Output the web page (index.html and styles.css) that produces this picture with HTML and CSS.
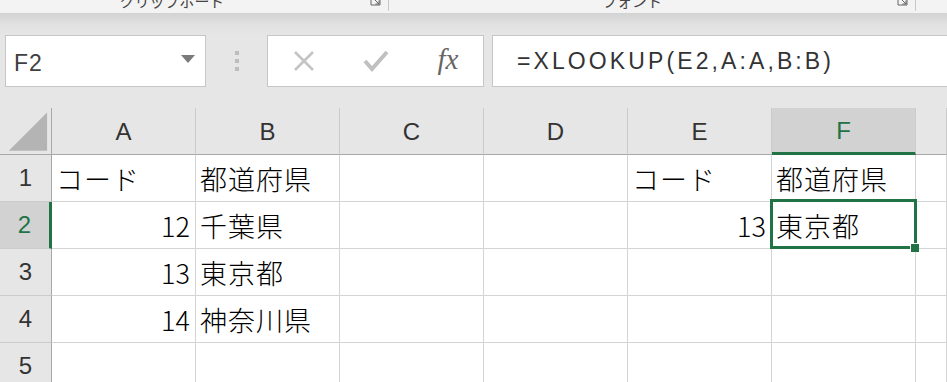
FILE: index.html
```html
<!DOCTYPE html>
<html lang="ja">
<head>
    <meta charset="UTF-8">
    <title>XLOOKUP</title>
    <link rel="stylesheet" href="styles.css">
</head>
<body>
    <div class="ribbon">
        <div class="group group-clip">
            <span class="group-label">クリップボード</span>
            <svg class="launcher" width="11" height="11" viewBox="0 0 11 11"><path d="M1 1h9v9H1z M4 4l5 5 M9 5.5V9H5.5" fill="none" stroke="#666" stroke-width="1"/></svg>
        </div>
        <div class="group group-font">
            <span class="group-label">フォント</span>
            <svg class="launcher" width="11" height="11" viewBox="0 0 11 11"><path d="M1 1h9v9H1z M4 4l5 5 M9 5.5V9H5.5" fill="none" stroke="#666" stroke-width="1"/></svg>
        </div>
    </div>

    <div class="toolbar">
        <div class="namebox">
            <span>F2</span>
            <svg width="14" height="8" viewBox="0 0 14 8"><path d="M0 0h14L7 8z" fill="#7a7a7a"/></svg>
        </div>
        <div class="grip"><i></i><i></i><i></i></div>
        <div class="fx-buttons">
            <svg width="22" height="20" viewBox="0 0 22 20"><path d="M2 1l18 18M20 1L2 19" stroke="#c4c4c4" stroke-width="2.6" fill="none"/></svg>
            <svg width="26" height="22" viewBox="0 0 26 22"><path d="M2 11l7 8L24 2" stroke="#c0c0c0" stroke-width="4" fill="none"/></svg>
            <span class="fx">fx</span>
        </div>
        <div class="formula">=XLOOKUP(E2,A:A,B:B)</div>
    </div>

    <div class="sheet">
        <div class="hd corner"><svg width="52" height="47" viewBox="0 0 52 47"><path d="M48 4V43H9z" fill="#b4b4b4"/></svg></div>
        <div class="hd col">A</div>
        <div class="hd col">B</div>
        <div class="hd col">C</div>
        <div class="hd col">D</div>
        <div class="hd col">E</div>
        <div class="hd col active">F</div>
        <div class="hd col"></div>

        <div class="hd row">1</div>
        <div class="cell">コード</div>
        <div class="cell">都道府県</div>
        <div class="cell"></div>
        <div class="cell"></div>
        <div class="cell">コード</div>
        <div class="cell">都道府県</div>
        <div class="cell"></div>

        <div class="hd row active">2</div>
        <div class="cell num">12</div>
        <div class="cell">千葉県</div>
        <div class="cell"></div>
        <div class="cell"></div>
        <div class="cell num">13</div>
        <div class="cell selected">東京都<span class="sel-box"><span class="handle"></span></span></div>
        <div class="cell"></div>

        <div class="hd row">3</div>
        <div class="cell num">13</div>
        <div class="cell">東京都</div>
        <div class="cell"></div>
        <div class="cell"></div>
        <div class="cell"></div>
        <div class="cell"></div>
        <div class="cell"></div>

        <div class="hd row">4</div>
        <div class="cell num">14</div>
        <div class="cell">神奈川県</div>
        <div class="cell"></div>
        <div class="cell"></div>
        <div class="cell"></div>
        <div class="cell"></div>
        <div class="cell"></div>

        <div class="hd row">5</div>
        <div class="cell"></div>
        <div class="cell"></div>
        <div class="cell"></div>
        <div class="cell"></div>
        <div class="cell"></div>
        <div class="cell"></div>
        <div class="cell"></div>
    </div>
</body>
</html>
```

FILE: styles.css
```css
* {
    margin: 0;
    padding: 0;
    box-sizing: border-box;
}
body {
    width: 947px;
    height: 382px;
    overflow: hidden;
    background-color: #e6e6e6;
    font-family: "Liberation Sans", "Noto Sans CJK JP", sans-serif;
}
.ribbon {
    display: flex;
    height: 13px;
    overflow: hidden;
    background-color: #f3f3f3;
}
.group {
    display: flex;
    align-items: flex-start;
    border-right: 1px solid #c8c8c8;
    height: 11px;
}
.group-clip {
    width: 389px;
}
.group-font {
    width: 527px;
}
.group-label {
    flex: 1;
    text-align: center;
    font-family: "Noto Sans CJK JP", sans-serif;
    font-size: 15px;
    line-height: 15px;
    color: #444;
    margin-top: -7px;
}
.group-clip .group-label {
    padding-right: 26px;
}
.group-font .group-label {
    padding-right: 22px;
}
.launcher {
    margin-top: -5px;
    margin-right: 7px;
}
.toolbar {
    display: flex;
    align-items: flex-start;
    height: 95px;
    padding: 22px 0 0 5px;
    background: linear-gradient(#d3d3d3 0, #e2e2e2 12px, #e6e6e6 22px);
}
.namebox {
    display: flex;
    align-items: center;
    justify-content: space-between;
    width: 201px;
    height: 52px;
    padding: 4px 10px 0 8px;
    background: #fff;
    border: 1px solid #c6c6c6;
    font-size: 23px;
    color: #404040;
    letter-spacing: 1px;
}
.namebox svg {
    margin-top: -8px;
}
.grip {
    display: flex;
    flex-direction: column;
    align-items: center;
    justify-content: center;
    gap: 4px;
    width: 61px;
    height: 52px;
}
.grip i {
    width: 4px;
    height: 4px;
    background: #bdbdbd;
}
.fx-buttons {
    display: grid;
    grid-template-columns: repeat(3, 72px);
    align-items: center;
    justify-items: center;
    width: 217px;
    height: 52px;
    background: #fff;
    border: 1px solid #c6c6c6;
}
.fx {
    font-family: "Liberation Serif", serif;
    font-style: italic;
    font-size: 29px;
    color: #666;
    margin-top: -4px;
}
.formula {
    flex: 1;
    height: 52px;
    margin-left: 8px;
    padding-left: 24px;
    display: flex;
    align-items: center;
    background: #fff;
    border: 1px solid #c6c6c6;
    border-right: none;
    font-size: 23px;
    letter-spacing: 3.1px;
    color: #333;
}
.sheet {
    display: grid;
    grid-template-columns: 52px repeat(6, 144px) 1fr;
    grid-template-rows: repeat(6, 47px);
}
.hd {
    display: flex;
    align-items: center;
    justify-content: center;
    background: #e6e6e6;
    font-size: 24px;
    color: #333;
}
.col {
    border-right: 1px solid #cbcbcb;
    border-bottom: 1px solid #a8a8a8;
    padding-top: 2px;
}
.row {
    border-right: 1px solid #a8a8a8;
    border-bottom: 1px solid #cbcbcb;
}
.corner {
    border-right: 1px solid #a8a8a8;
    border-bottom: 1px solid #a8a8a8;
}
.col.active {
    background: #d2d2d2;
    color: #217346;
    border-bottom: 3px solid #217346;
}
.row.active {
    background: #d2d2d2;
    color: #217346;
    border-right: 3px solid #217346;
}
.cell {
    position: relative;
    display: flex;
    align-items: center;
    padding: 0 5px 0 4px;
    background: #fff;
    border-right: 1px solid #d4d4d4;
    border-bottom: 1px solid #d4d4d4;
    font-family: "Noto Sans CJK JP", sans-serif;
    font-weight: 300;
    font-size: 27px;
    letter-spacing: 1px;
    color: #000;
    white-space: nowrap;
}
.num {
    justify-content: flex-end;
    letter-spacing: 0;
}
.selected {
    z-index: 1;
}
.sel-box {
    position: absolute;
    top: -3px;
    left: -2px;
    right: -2px;
    bottom: -1px;
    border: 3px solid #217346;
}
.handle {
    position: absolute;
    right: -5px;
    bottom: -6px;
    width: 9px;
    height: 9px;
    background: #217346;
    border: 1px solid #fff;
    border-width: 1px 0 0 1px;
}
```
